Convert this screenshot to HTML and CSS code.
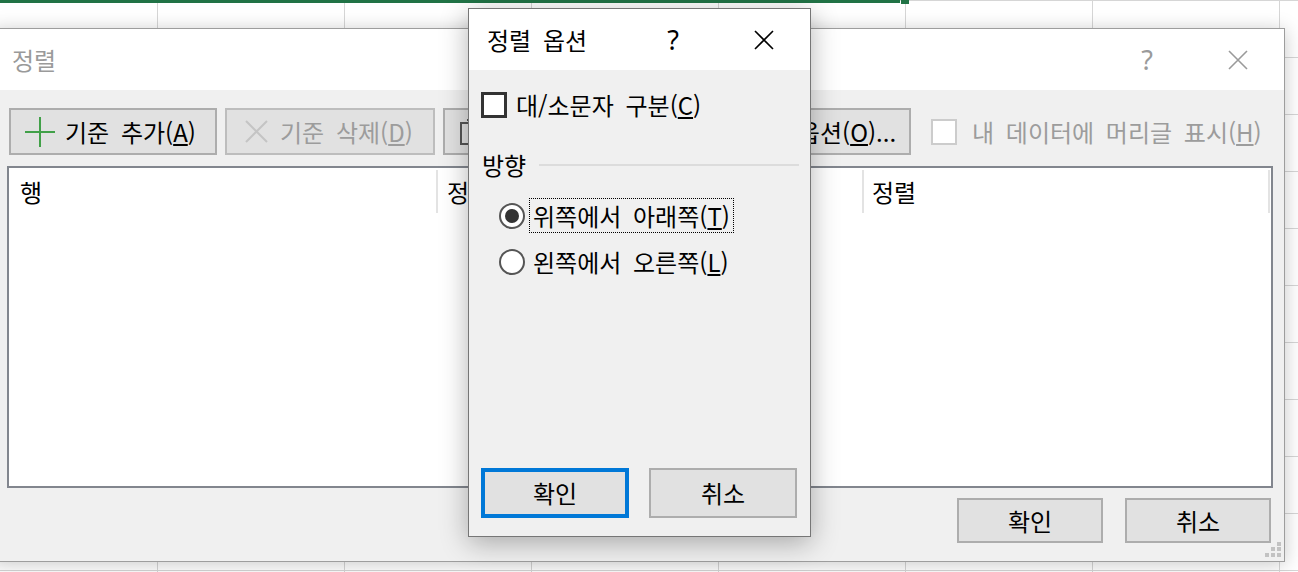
FILE: index.html
```html
<!DOCTYPE html>
<html lang="ko">
<head>
<meta charset="utf-8">
<title>정렬</title>
<link rel="stylesheet" href="styles.css">
</head>
<body>
<div class="sheet">
  <div class="selection"><div class="sel-border"></div><div class="fill-handle"></div></div>
</div>

<div class="dialog sort-dialog">
  <div class="titlebar">
    <div class="title inactive">정렬</div>
    <div class="help inactive">?</div>
    <svg class="close" width="20" height="20" viewBox="0 0 20 20"><path d="M1 1L19 19M19 1L1 19" stroke="#9a9a9a" stroke-width="1.6" fill="none"/></svg>
  </div>
  <div class="body">
    <div class="toolbar">
      <div class="btn btn-add">
        <svg width="30" height="30" viewBox="0 0 30 30"><path d="M15 0V30M0 15H30" stroke="#41a048" stroke-width="2" fill="none"/></svg>
        <span class="lbl">기준 추가(<u>A</u>)</span>
      </div>
      <div class="btn btn-del disabled">
        <svg width="23" height="23" viewBox="0 0 23 23"><path d="M1 1L22 22M22 1L1 22" stroke="#c4c4c4" stroke-width="2" fill="none"/></svg>
        <span class="lbl">기준 삭제(<u>D</u>)</span>
      </div>
      <div class="btn btn-copy">
        <svg width="26" height="26" viewBox="0 0 26 26"><path d="M1 4H17V25H1Z M7 1H25V20" stroke="#555" stroke-width="2" fill="none"/></svg>
        <span class="lbl">기준 복사(<u>C</u>)</span>
      </div>
      <div class="btn btn-arrow">▲</div>
      <div class="btn btn-arrow">▼</div>
      <div class="btn btn-opt">옵션(<u>O</u>)...</div>
      <div class="check disabled">
        <span class="box"></span>
        <span class="lbl">내 데이터에 머리글 표시(<u>H</u>)</span>
      </div>
    </div>
    <div class="list">
      <div class="list-head">
        <div class="col col1">행</div>
        <div class="col col2">정렬 기준</div>
        <div class="col col3">정렬</div>
      </div>
    </div>
    <div class="footer">
      <div class="btn btn-dlg">확인</div>
      <div class="btn btn-dlg">취소</div>
    </div>
  </div>
  <svg class="grip" width="16" height="16" viewBox="0 0 16 16">
    <rect x="12" y="0" width="4" height="4" fill="#c2c2c2"/>
    <rect x="6" y="5" width="4" height="4" fill="#c2c2c2"/>
    <rect x="12" y="5" width="4" height="4" fill="#c2c2c2"/>
    <rect x="0" y="11" width="4" height="4" fill="#c2c2c2"/>
    <rect x="6" y="11" width="4" height="4" fill="#c2c2c2"/>
    <rect x="12" y="11" width="4" height="4" fill="#c2c2c2"/>
  </svg>
</div>

<div class="dialog options-dialog">
  <div class="titlebar">
    <div class="title">정렬 옵션</div>
    <div class="help">?</div>
    <svg class="close" width="20" height="20" viewBox="0 0 20 20"><path d="M1 1L19 19M19 1L1 19" stroke="#000" stroke-width="1.6" fill="none"/></svg>
  </div>
  <div class="body">
    <div class="opt-check">
      <span class="box"></span>
      <span class="lbl">대/소문자 구분(<u>C</u>)</span>
    </div>
    <div class="group-head">
      <span class="group-title">방향</span>
      <span class="group-line"></span>
    </div>
    <div class="radio-row">
      <span class="radio on"></span>
      <span class="radio-lbl focus">위쪽에서 아래쪽(<u>T</u>)</span>
    </div>
    <div class="radio-row second">
      <span class="radio"></span>
      <span class="radio-lbl">왼쪽에서 오른쪽(<u>L</u>)</span>
    </div>
    <div class="opt-footer">
      <div class="btn btn-opt-dlg default">확인</div>
      <div class="btn btn-opt-dlg">취소</div>
    </div>
  </div>
</div>
</body>
</html>
```

FILE: styles.css
```css
html, body {
  margin: 0;
  padding: 0;
}

body {
  width: 1298px;
  height: 572px;
  overflow: hidden;
  position: relative;
  font-family: "Noto Sans CJK KR", "Noto Sans", sans-serif;
  font-size: 24px;
  word-spacing: 5px;
  color: #000;
  background-color: #fff;
  background-image:
    linear-gradient(to right, #d6d6d6 1px, transparent 1px),
    linear-gradient(to bottom, #d6d6d6 1px, transparent 1px);
  background-size: 187px 100%, 100% 57px;
  background-position: 157px 0, 0 0;
}

.selection {
  display: flex;
  align-items: flex-start;
}

.sel-border {
  width: 900px;
  height: 3px;
  background: #217346;
}

.fill-handle {
  width: 8px;
  height: 4px;
  background: #217346;
  margin-left: 1px;
}

/* ---------- dialogs ---------- */
.dialog {
  position: absolute;
  box-sizing: border-box;
  display: flex;
  flex-direction: column;
  background: #f0f0f0;
}

.titlebar {
  flex: none;
  height: 61px;
  background: #fff;
  display: flex;
  align-items: center;
}

.title {
  flex: 1;
  line-height: 1;
  font-size: 24px;
}

.help {
  width: 10px;
  margin-right: 76px;
  font-family: "Noto Sans", sans-serif;
  font-size: 27px;
  line-height: 1;
  text-align: center;
  display: flex;
  justify-content: center;
}

.close {
  flex: none;
  margin-right: 36px;
}

.inactive {
  color: #9a9a9a;
}

.body {
  flex: 1;
  display: flex;
  flex-direction: column;
}

.btn {
  box-sizing: border-box;
  border: 2px solid #adadad;
  background: #e1e1e1;
  display: flex;
  align-items: center;
  justify-content: center;
  line-height: 1;
  white-space: nowrap;
  flex: none;
}

u {
  text-underline-offset: 2px;
}

/* ---------- sort dialog ---------- */
.sort-dialog {
  left: -9px;
  top: 28px;
  width: 1294px;
  height: 534px;
  border: 1px solid #9d9d9d;
  box-shadow: 0 2px 18px rgba(0, 0, 0, 0.22);
}

.sort-dialog .title {
  padding-left: 20px;
}

.sort-dialog .body {
  padding: 18px 11px 0 15px;
}

.toolbar {
  display: flex;
  gap: 8px;
  padding-left: 2px;
  height: 47px;
}

.btn-add {
  width: 208px;
  justify-content: flex-start;
  padding-left: 14px;
}

.btn-add .lbl {
  margin-left: 10px;
}

.btn-del {
  width: 210px;
  justify-content: flex-start;
  padding-left: 18px;
  border-color: #bdbdbd;
}

.btn-del .lbl {
  margin-left: 12px;
}

.disabled {
  color: #9c9c9c;
}

.btn-copy {
  width: 212px;
  justify-content: flex-start;
  padding-left: 15px;
}

.btn-copy .lbl {
  margin-left: 10px;
}

.btn-arrow {
  width: 52px;
  font-size: 14px;
  color: #555;
}

.btn-opt {
  width: 128px;
}

.check {
  display: flex;
  align-items: center;
  margin-left: 12px;
}

.check .box {
  box-sizing: border-box;
  width: 26px;
  height: 26px;
  border: 2px solid #cccccc;
  background: #fff;
}

.check .lbl {
  margin-left: 15px;
  line-height: 1;
  white-space: nowrap;
}

.list {
  box-sizing: border-box;
  margin-top: 11px;
  height: 322px;
  border: 2px solid #82868e;
  background: #fff;
}

.list-head {
  display: flex;
  margin-top: 2px;
  height: 43px;
}

.col {
  box-sizing: border-box;
  border-right: 2px solid #e3e3e3;
  display: flex;
  align-items: center;
  line-height: 1;
}

.col1 {
  width: 429px;
  padding-left: 11px;
}

.col2 {
  width: 426px;
  padding-left: 9px;
}

.col3 {
  width: 406px;
  padding-left: 8px;
}

.footer {
  display: flex;
  justify-content: flex-end;
  gap: 22px;
  margin-top: 10px;
  padding-right: 2px;
}

.btn-dlg {
  width: 146px;
  height: 45px;
}

.grip {
  position: absolute;
  right: 3px;
  bottom: 3px;
}

/* ---------- options dialog ---------- */
.options-dialog {
  left: 468px;
  top: 8px;
  width: 343px;
  height: 529px;
  border: 1px solid #767676;
  box-shadow: 0 6px 26px rgba(0, 0, 0, 0.3);
}

.options-dialog .title {
  padding-left: 18px;
}

.options-dialog .body {
  padding: 22px 11px 18px 12px;
}

.opt-check {
  display: flex;
  align-items: center;
  height: 26px;
}

.opt-check .box {
  box-sizing: border-box;
  width: 26px;
  height: 26px;
  border: 3px solid #333;
  background: #fff;
}

.opt-check .lbl {
  margin-left: 9px;
  line-height: 1;
}

.group-head {
  display: flex;
  align-items: center;
  height: 26px;
  margin-top: 34px;
  padding-left: 1px;
}

.group-title {
  line-height: 1;
}

.group-line {
  flex: 1;
  height: 2px;
  margin-left: 13px;
  background: #dcdcdc;
}

.radio-row {
  display: flex;
  align-items: center;
  height: 35px;
  margin-top: 20px;
}

.radio-row.second {
  margin-top: 11px;
}

.radio {
  box-sizing: border-box;
  width: 26px;
  height: 26px;
  margin-left: 18px;
  border-radius: 50%;
  border: 2px solid #555;
  background: #fff;
  display: flex;
  align-items: center;
  justify-content: center;
}

.radio.on::after {
  content: "";
  width: 14px;
  height: 14px;
  border-radius: 50%;
  background: #333;
}

.radio-lbl {
  box-sizing: border-box;
  height: 35px;
  margin-left: 4px;
  padding: 0 3px;
  border: 1px solid transparent;
  display: flex;
  align-items: center;
  line-height: 1;
  white-space: nowrap;
}

.radio-lbl.focus {
  border: 1px dotted #000;
}

.opt-footer {
  margin-top: auto;
  display: flex;
  gap: 20px;
}

.btn-opt-dlg {
  width: 148px;
  height: 50px;
}

.btn-opt-dlg.default {
  border: 4px solid #0078d7;
}
```
